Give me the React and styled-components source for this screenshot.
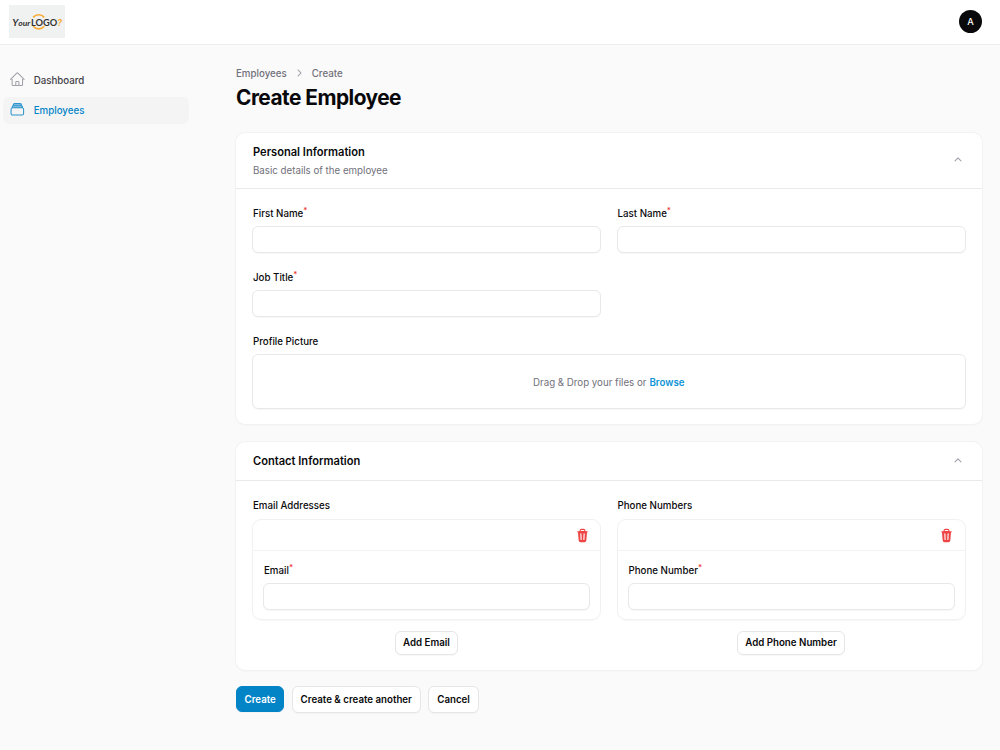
import React from 'react';
import styled, { createGlobalStyle } from 'styled-components';
import {
  HiOutlineHome,
  HiMiniChevronUp,
  HiMiniChevronRight,
  HiMiniTrash,
} from 'react-icons/hi2';

const GlobalStyle = createGlobalStyle`
  * {
    box-sizing: border-box;
  }
  body {
    margin: 0;
    background-color: #fafafa;
    color: #09090b;
    font-family: Inter, sans-serif;
    font-size: 9.73px;
    line-height: 15px;
  }
  h1, h2, p {
    margin: 0;
  }
  button, input {
    font-family: inherit;
  }
`

const Page = styled.div`
  height: 750px;
  overflow: hidden;
`

const Topbar = styled.header`
  display: flex;
  align-items: center;
  justify-content: space-between;
  height: 44px;
  padding: 0 18px 0 9px;
  background-color: #fff;
  box-shadow: 0 0 0 1px #ededee;
`

const LogoSvg = styled.svg`
  display: block;
  width: 56px;
  height: 33px;
  margin-bottom: 1px;
`

const Avatar = styled.div`
  display: flex;
  align-items: center;
  justify-content: center;
  width: 23px;
  height: 23px;
  margin-bottom: 1px;
  border-radius: 50%;
  background-color: #09090b;
  color: #fff;
  font-size: 9.2px;
  font-weight: 500;
`

const Layout = styled.div`
  display: flex;
`

const Sidebar = styled.nav`
  display: flex;
  flex-direction: column;
  flex: none;
  gap: 3px;
  width: 236px;
  padding: 23px 47px 0 3px;
`

const NavItem = styled.a`
  display: flex;
  align-items: center;
  gap: 8px;
  height: 27px;
  padding: 0 6px;
  border-radius: 6px;
  background-color: ${p => (p.$active ? '#f4f4f5' : 'transparent')};
  color: ${p => (p.$active ? '#0284c7' : '#3f3f46')};
  font-weight: 500;

  svg {
    width: 16.7px;
    height: 16.7px;
    margin-bottom: 2px;
    color: ${p => (p.$active ? '#2a93cd' : '#a1a1aa')};
  }
`

const Main = styled.main`
  flex: 1;
  padding: 21px 18px 0 0;
`

const Breadcrumbs = styled.div`
  display: flex;
  align-items: center;
  gap: 5.5px;
  height: 16px;
  color: #71717a;
  font-weight: 500;

  svg {
    width: 14px;
    height: 14px;
    color: #a1a1aa;
  }
`

const Title = styled.h1`
  margin-top: 3px;
  font-size: 20.85px;
  font-weight: 700;
  letter-spacing: -0.025em;
  line-height: 27px;
`

const Card = styled.section`
  margin-top: ${p => p.$top}px;
  border-radius: 9px;
  background-color: #fff;
  box-shadow: 0 0 0 1px #f2f2f3, 0 1px 2px rgba(0, 0, 0, 0.05);
`

const CardHeader = styled.header`
  display: flex;
  align-items: center;
  justify-content: space-between;
  height: ${p => p.$height}px;
  padding: 0 17px 0 17px;
  border-bottom: 1px solid #e9e9eb;

  svg {
    width: 14px;
    height: 14px;
    margin-bottom: 1px;
    color: #a1a1aa;
  }
`

const CardTitle = styled.h2`
  font-size: 11.12px;
  font-weight: 600;
  line-height: 17px;
`

const CardDescription = styled.p`
  margin-top: 2px;
  color: #71717a;
`

const CardBody = styled.div`
  padding: 17px 16.5px 15px 16px;
`

const Grid = styled.div`
  display: grid;
  grid-template-columns: 1fr 1fr;
  gap: 17px 15.5px;
`

const FieldBox = styled.div`
  grid-column: ${p => (p.$full ? '1 / -1' : 'auto')};
`

const Label = styled.label`
  display: block;
  height: 15px;
  margin-bottom: ${p => p.$gap || 5}px;
  padding-left: 1px;
  font-weight: 500;
`

const Required = styled.sup`
  color: #ef2b2b;
  font-size: 8px;
  line-height: 0;
  vertical-align: super;
`

const Input = styled.input`
  display: block;
  width: 100%;
  height: 27px;
  padding: 0 9px;
  border: 1px solid #e8e8e9;
  border-radius: 6px;
  outline: none;
  background-color: #fff;
  box-shadow: 0 1px 1px rgba(0, 0, 0, 0.03);
`

const DropZone = styled.div`
  display: flex;
  align-items: center;
  justify-content: center;
  gap: 3px;
  height: 55px;
  padding-top: 1px;
  border: 1px solid #e8e8e9;
  border-radius: 6px;
  box-shadow: 0 1px 1px rgba(0, 0, 0, 0.03);
  color: #71717a;
`

const Browse = styled.span`
  color: #0e93d6;
  font-weight: 600;
`

const RepeaterItem = styled.div`
  border: 1px solid #f1f1f2;
  border-radius: 9px;
  box-shadow: 0 1px 1px rgba(0, 0, 0, 0.03);
`

const RepeaterHeader = styled.div`
  display: flex;
  align-items: center;
  justify-content: flex-end;
  height: 31px;
  padding-right: 10.5px;
  border-bottom: 1px solid #f3f3f4;

  svg {
    width: 15px;
    height: 15px;
    color: #ef4444;
  }
`

const RepeaterBody = styled.div`
  padding: 12px 10px 9px;
`

const AddRow = styled.div`
  display: flex;
  justify-content: center;
  margin-top: 11px;
`

const Button = styled.button`
  height: ${p => (p.$small ? 24 : 27)}px;
  padding: 0 ${p => (p.$small ? 7 : 8)}px ${p => (p.$small ? 1 : 0)}px;
  border: 1px solid ${p => (p.$primary ? '#0284c7' : '#e6e6e7')};
  border-radius: 6px;
  background-color: ${p => (p.$primary ? '#0284c7' : '#fff')};
  color: ${p => (p.$primary ? '#fff' : '#09090b')};
  box-shadow: 0 1px 1px rgba(0, 0, 0, 0.03);
  font-size: 9.73px;
  font-weight: 600;
  white-space: nowrap;
`

const PrimaryButton = styled(Button)`
  height: 26px;
  padding: 1px 7.5px 0;
`

const Actions = styled.div`
  display: flex;
  gap: 7.3px;
  margin-top: 16px;
`

const Logo = () => (
  <LogoSvg viewBox="0 0 56 33">
    <rect width="56" height="33" fill="#f0f1f1" />
    <path d="M24.2 12.4a7 7 0 0 1 11 0M24.2 21.2a7 7 0 0 0 11 0" fill="none" stroke="#f9ab35" strokeWidth="1.7" />
    <text x="3.2" y="20.5" fontFamily="Lato" fontSize="9.5" fontStyle="italic" fontWeight="700" fill="#333" textLength="18.2" lengthAdjust="spacingAndGlyphs">
      Y<tspan fontSize="8">our</tspan>
    </text>
    <text x="22" y="20.5" fontFamily="Lato" fontSize="9.8" fontWeight="700" fill="#333" textLength="31" lengthAdjust="spacingAndGlyphs">
      LOGO<tspan fontFamily="Inter" fontSize="9" fontStyle="italic" fill="#f9ab35">?</tspan>
    </text>
  </LogoSvg>
)

const StackIcon = () => (
  <svg viewBox="0 0 24 24" fill="none" stroke="currentColor" strokeWidth="1.5" strokeLinecap="round" strokeLinejoin="round">
    <path d="M8.25 3h7.5A2.25 2.25 0 0 1 18 5.25L19.5 9.9h-15L6 5.25A2.25 2.25 0 0 1 8.25 3Z" fill="currentColor" fillOpacity="0.45" stroke="none" />
    <path d="M6 6.878V6a2.25 2.25 0 0 1 2.25-2.25h7.5A2.25 2.25 0 0 1 18 6v.878m-12 0c.235-.083.487-.128.75-.128h10.5c.263 0 .515.045.75.128m-12 0A2.25 2.25 0 0 0 4.5 9v.878m13.5-3A2.25 2.25 0 0 1 19.5 9v.878m0 0a2.246 2.246 0 0 0-.75-.128H5.25c-.263 0-.515.045-.75.128m15 0A2.25 2.25 0 0 1 21 12v6a2.25 2.25 0 0 1-2.25 2.25H5.25A2.25 2.25 0 0 1 3 18v-6c0-.98.626-1.813 1.5-2.122" />
  </svg>
)

const Field = ({ label }) => (
  <FieldBox>
    <Label>
      {label}
      <Required>*</Required>
    </Label>
    <Input type="text" />
  </FieldBox>
)

const Repeater = ({ label, field, action }) => (
  <FieldBox>
    <Label $gap={6}>{label}</Label>
    <RepeaterItem>
      <RepeaterHeader>
        <HiMiniTrash />
      </RepeaterHeader>
      <RepeaterBody>
        <Field label={field} />
      </RepeaterBody>
    </RepeaterItem>
    <AddRow>
      <Button $small>{action}</Button>
    </AddRow>
  </FieldBox>
)

const App = () => (
  <Page>
    <GlobalStyle />
    <Topbar>
      <Logo />
      <Avatar>A</Avatar>
    </Topbar>

    <Layout>
      <Sidebar>
        <NavItem>
          <HiOutlineHome />
          Dashboard
        </NavItem>
        <NavItem $active>
          <StackIcon />
          Employees
        </NavItem>
      </Sidebar>

      <Main>
        <Breadcrumbs>
          <span>Employees</span>
          <HiMiniChevronRight />
          <span>Create</span>
        </Breadcrumbs>
        <Title>Create Employee</Title>

        <Card $top={22}>
          <CardHeader $height={56}>
            <div>
              <CardTitle>Personal Information</CardTitle>
              <CardDescription>Basic details of the employee</CardDescription>
            </div>
            <HiMiniChevronUp />
          </CardHeader>
          <CardBody>
            <Grid>
              <Field label="First Name" />
              <Field label="Last Name" />
              <Field label="Job Title" />
              <FieldBox $full>
                <Label>Profile Picture</Label>
                <DropZone>
                  <span>Drag &amp; Drop your files or</span>
                  <Browse>Browse</Browse>
                </DropZone>
              </FieldBox>
            </Grid>
          </CardBody>
        </Card>

        <Card $top={18}>
          <CardHeader $height={39}>
            <CardTitle>Contact Information</CardTitle>
            <HiMiniChevronUp />
          </CardHeader>
          <CardBody>
            <Grid>
              <Repeater label="Email Addresses" field="Email" action="Add Email" />
              <Repeater label="Phone Numbers" field="Phone Number" action="Add Phone Number" />
            </Grid>
          </CardBody>
        </Card>

        <Actions>
          <PrimaryButton $primary>Create</PrimaryButton>
          <Button>Create &amp; create another</Button>
          <Button>Cancel</Button>
        </Actions>
      </Main>
    </Layout>
  </Page>
)

export default App;
